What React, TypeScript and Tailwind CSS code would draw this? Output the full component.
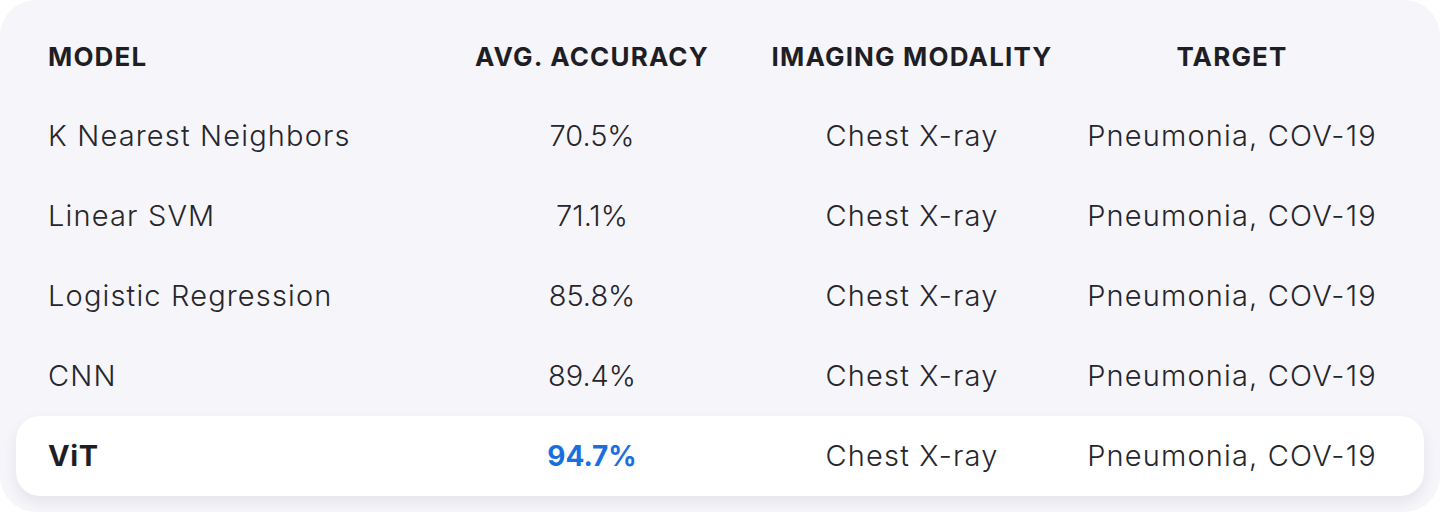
import React from "react";

type Row = {
  model: string;
  accuracy: string;
  modality: string;
  target: string;
  best?: boolean;
};

const rows: Row[] = [
  { model: "K Nearest Neighbors", accuracy: "70.5%", modality: "Chest X-ray", target: "Pneumonia, COV-19" },
  { model: "Linear SVM", accuracy: "71.1%", modality: "Chest X-ray", target: "Pneumonia, COV-19" },
  { model: "Logistic Regression", accuracy: "85.8%", modality: "Chest X-ray", target: "Pneumonia, COV-19" },
  { model: "CNN", accuracy: "89.4%", modality: "Chest X-ray", target: "Pneumonia, COV-19" },
  { model: "ViT", accuracy: "94.7%", modality: "Chest X-ray", target: "Pneumonia, COV-19", best: true },
];

const cols = "grid grid-cols-[384px_320px_320px_320px] items-center h-20 px-8";

export default function App() {
  return (
    <div className="w-[1440px] h-[512px] bg-white font-['Inter',sans-serif]">
      <div className="h-full rounded-[36px] bg-[#f5f5fa] p-4">
        <div className={`${cols} text-[26px] font-bold tracking-[0.045em] text-[#1e1e24]`}>
          <div>MODEL</div>
          <div className="text-center">AVG. ACCURACY</div>
          <div className="text-center">IMAGING MODALITY</div>
          <div className="text-center">TARGET</div>
        </div>
        {rows.map((r) => (
          <div
            key={r.model}
            className={`${cols} text-[29px] tracking-[0.04em] text-[#26262c] whitespace-nowrap ${
              r.best ? "bg-white rounded-3xl shadow-[0_6px_14px_rgba(40,40,70,0.08)]" : "font-light"
            }`}
          >
            <div className={r.best ? "font-bold tracking-[0.02em] text-[#1e1e24]" : ""}>{r.model}</div>
            <div
              className={`text-center tracking-normal ${
                r.best ? "font-bold text-[28px] text-[#1a6fe0]" : ""
              }`}
            >
              {r.accuracy}
            </div>
            <div className={`text-center ${r.best ? "font-light" : ""}`}>{r.modality}</div>
            <div className={`text-center ${r.best ? "font-light" : ""}`}>{r.target}</div>
          </div>
        ))}
      </div>
    </div>
  );
}
